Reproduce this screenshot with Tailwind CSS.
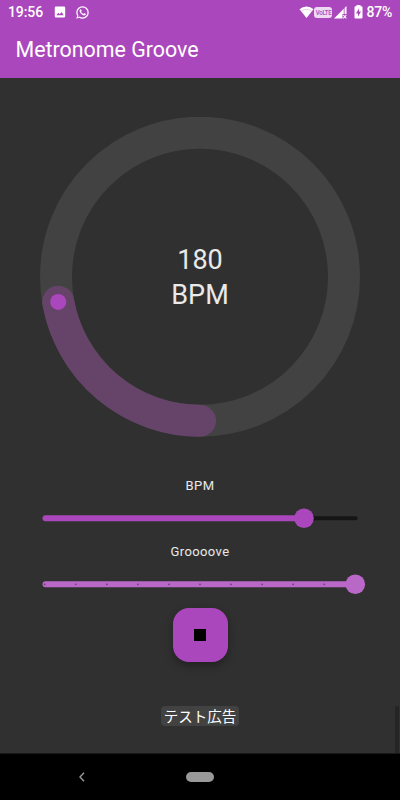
<!DOCTYPE html>
<html lang="ja">
<head>
    <meta charset="UTF-8">
    <meta name="viewport" content="width=device-width, initial-scale=1.0">
    <title>Metronome Groove</title>
    <script src="https://cdn.jsdelivr.net/npm/@tailwindcss/browser@4"></script>
</head>
<body class="relative flex h-[800px] w-[400px] flex-col overflow-hidden bg-[#303030] font-['Roboto','Noto_Sans_CJK_JP',sans-serif]">

    <header class="h-[78px] shrink-0 bg-[#ab47bc] text-white">
        <!-- Status bar -->
        <div class="flex h-6 items-center pr-2 pl-2 text-sm font-medium">
            <span class="w-[46px] leading-6 tracking-[-0.1px]">19:56</span>
            <svg class="size-3" viewBox="0 0 12 12">
                <path fill="#fff" fill-rule="evenodd" d="M2 .5h8q1.200 0 1.200 1.200v8.600q0 1.200-1.200 1.200H2Q.8 11.500.8 10.300V1.700Q.8.500 2 .5zM2.300 9.300h7.400L7.500 6.100 5.700 8.300 4.300 6.700z"/>
            </svg>
            <svg class="ml-[9px] size-[15px]" viewBox="0 0 24 24" fill="#fff">
                <path d="M16.750 13.960c.25.130.41.200.46.300.06.110.04.610-.21 1.180-.2.560-1.240 1.100-1.700 1.120-.46.020-.47.360-2.960-.73-2.490-1.090-3.990-3.750-4.110-3.920-.12-.17-.96-1.380-.92-2.610.05-1.220.69-1.800.95-2.040.24-.26.510-.29.680-.26h.47c.15 0 .36-.06.550.45l.69 1.870c.06.130.1.280.010.440l-.27.410-.39.420c-.12.120-.26.250-.12.500.12.260.62 1.090 1.320 1.780.91.880 1.710 1.170 1.950 1.300.24.140.39.120.54-.04l.81-.94c.19-.25.350-.19.580-.11l1.670.88M12 2a10 10 0 0 1 10 10 10 10 0 0 1-10 10c-1.970 0-3.800-.57-5.350-1.550L2 22l1.550-4.650A9.970 9.970 0 0 1 2 12 10 10 0 0 1 12 2m0 2a8 8 0 0 0-8 8c0 1.720.54 3.310 1.460 4.610L4.500 19.500l2.890-.96A7.950 7.950 0 0 0 12 20a8 8 0 0 0 8-8 8 8 0 0 0-8-8z"/>
            </svg>
            <div class="ml-auto flex items-center">
                <svg class="h-3.5 w-[15px]" viewBox="0 0 15 14">
                    <path fill="#fff" d="M.5 4.200Q3.500 1.500 7.500 1.500t7 2.700L7.500 13z"/>
                    <path fill="none" stroke="#ab47bc" stroke-opacity=".35" stroke-width=".7" d="M2.200 6.100q5.300-3.500 10.600 0"/>
                </svg>
                <span class="flex h-[11px] w-[18px] items-center justify-center rounded-[3px] bg-white/80 text-[#ab47bc]">
                    <span class="shrink-0 scale-x-75 text-[8px] leading-[11px] tracking-[-0.2px] whitespace-nowrap">VoLTE</span>
                </span>
                <svg class="ml-0.5 size-[13px]" viewBox="0 0 13 13">
                    <path fill="#fff" d="M0 12.500 12.500 0v8H8.500v4.500z"/>
                    <path stroke="#ab47bc" stroke-width=".8" d="M10.200 2v6"/>
                    <path stroke="#fff" stroke-width="1.100" d="m9.300 9 3 3.400m0-3.400-3 3.400"/>
                </svg>
                <svg class="ml-[7px] h-[14px] w-[9px]" viewBox="0 0 9 14">
                    <path fill="#fff" d="M2.500 0h4v1.300H7.500q1 0 1 1v10.200q0 1-1 1h-6q-1 0-1-1V2.300q0-1 1-1h1z"/>
                    <path fill="#ab47bc" d="M5 3.500v3h2L4 11.700V8.500H2z"/>
                </svg>
                <span class="ml-[3px] leading-6 tracking-[-0.2px]">87%</span>
            </div>
        </div>
        <h1 class="ml-[15.500px] text-[21.400px] leading-[52px]">Metronome Groove</h1>
    </header>

    <main class="flex flex-1 flex-col items-center text-white/90">
        <!-- Tempo dial -->
        <div class="mt-[39px] grid size-80 shrink-0 place-items-center">
            <svg class="col-start-1 row-start-1 size-80" viewBox="0 0 320 320" fill="none">
                <circle cx="160" cy="159.700" r="144" stroke="#424242" stroke-width="32"/>
                <path d="M160 303.700A144 144 0 0 1 18.200 184.700" stroke="#664469" stroke-width="32" stroke-linecap="round"/>
                <circle cx="18.200" cy="184.900" r="8" fill="#ab47bc"/>
            </svg>
            <p class="col-start-1 row-start-1 pt-0.5 text-center text-[27px] leading-[35px]">180<br>BPM</p>
        </div>

        <label class="mt-[41px] text-[13px] leading-4 tracking-[0.4px]">BPM</label>
        <svg class="mt-3 h-6 w-[400px] shrink-0" viewBox="0 0 400 24">
            <rect x="300" y="10.300" width="57.500" height="4" rx="2" fill="#151515"/>
            <rect x="42.500" y="9.300" width="262" height="6" rx="3" fill="#ab47bc"/>
            <circle cx="304" cy="12.300" r="9.800" fill="#ab47bc"/>
        </svg>

        <label class="mt-[14px] text-[13px] leading-4 tracking-[0.4px]">Groooove</label>
        <svg class="mt-3 h-6 w-[400px] shrink-0" viewBox="0 0 400 24">
            <rect x="42.500" y="9.300" width="313" height="6" rx="3" fill="#ba68c8"/>
            <path d="M44.700 12.300h280" stroke="#66446b" stroke-width="1.800" stroke-linecap="round" stroke-dasharray="0 31.060"/>
            <circle cx="355.300" cy="12.300" r="9.800" fill="#ba68c8"/>
        </svg>

        <button class="mt-[11.500px] grid h-[54.500px] w-[55px] shrink-0 place-items-center rounded-2xl bg-[#ab47bc] shadow-[0_4px_8px_rgba(0,0,0,0.3)]">
            <span class="size-3 bg-black"></span>
        </button>

        <p class="mt-11 h-5 w-[78px] rounded bg-[#424242] text-center text-[14.500px] leading-[23px] text-white">テスト広告</p>
    </main>

    <div class="absolute top-[706px] left-[395px] h-[47px] w-1 bg-[#252525]"></div>

    <nav class="flex h-[47px] shrink-0 items-center border-t border-[#181818] bg-black">
        <svg class="ml-[78px] h-2.5 w-2" viewBox="0 0 8 10" fill="none">
            <path d="M6 .8 2 5l4 4.200" stroke="#999" stroke-width="1.400"/>
        </svg>
        <span class="ml-[100px] h-2.5 w-7 rounded-full bg-[#999]"></span>
    </nav>

</body>
</html>
